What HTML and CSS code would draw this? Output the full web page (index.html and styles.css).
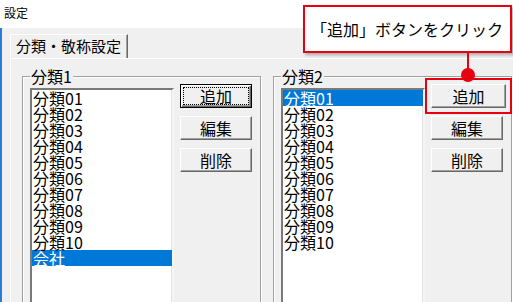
FILE: index.html
```html
<!DOCTYPE html>
<html lang="ja">
<head>
    <meta charset="UTF-8">
    <title>設定</title>
    <link rel="stylesheet" href="styles.css">
</head>
<body>
    <div class="window">
        <div class="titlebar">設定</div>

        <div class="client">
            <div class="tabs">
                <div class="tab">分類・敬称設定</div>
            </div>

            <div class="panel">
                <fieldset class="group">
                    <legend>分類1</legend>
                    <div class="group-body">
                        <ul class="listbox">
                            <li>分類01</li>
                            <li>分類02</li>
                            <li>分類03</li>
                            <li>分類04</li>
                            <li>分類05</li>
                            <li>分類06</li>
                            <li>分類07</li>
                            <li>分類08</li>
                            <li>分類09</li>
                            <li>分類10</li>
                            <li class="selected">会社</li>
                        </ul>
                        <div class="buttons">
                            <button class="btn default"><span>追加</span></button>
                            <button class="btn">編集</button>
                            <button class="btn">削除</button>
                        </div>
                    </div>
                </fieldset>

                <fieldset class="group">
                    <legend>分類2</legend>
                    <div class="group-body">
                        <ul class="listbox">
                            <li class="selected">分類01</li>
                            <li>分類02</li>
                            <li>分類03</li>
                            <li>分類04</li>
                            <li>分類05</li>
                            <li>分類06</li>
                            <li>分類07</li>
                            <li>分類08</li>
                            <li>分類09</li>
                            <li>分類10</li>
                        </ul>
                        <div class="buttons">
                            <button class="btn marked">追加</button>
                            <button class="btn">編集</button>
                            <button class="btn">削除</button>
                        </div>
                    </div>
                </fieldset>
            </div>
        </div>

        <!-- annotation overlay -->
        <div class="callout">「追加」ボタンをクリック</div>
        <div class="callout-line"></div>
        <div class="callout-dot"></div>
    </div>
</body>
</html>
```

FILE: styles.css
```css
:root {
    --face: #f0f0f0;
    --shadow: #a0a0a0;
    --dark: #696969;
    --select: #0078d7;
    --accent: #e60012;
    --frame: #2a7bd4;
}

* {
    margin: 0;
    padding: 0;
    box-sizing: border-box;
}

body {
    width: 513px;
    height: 302px;
    overflow: hidden;
    background: #fff;
    font-family: "Noto Sans CJK JP", "Liberation Sans", sans-serif;
    color: #000;
}

.window {
    position: relative;
    height: 302px;
}

.titlebar {
    height: 28px;
    padding: 5px 0 0 4px;
    font-size: 12px;
    line-height: 16px;
    background: #fff;
}

.client {
    height: 274px;
    overflow: hidden;
    background: var(--face);
    border-left: 2px solid var(--frame);
    padding: 6px 0 0 8px;
}

/* tab header */
.tabs {
    display: flex;
}

.tab {
    height: 24px;
    padding: 0 6px 0 5px;
    font-size: 15px;
    line-height: 22px;
    border-top: 1px solid #fff;
    border-left: 1px solid #fff;
    border-right: 1px solid var(--dark);
    box-shadow: inset -1px 0 var(--shadow);
}

.panel {
    display: flex;
    gap: 12px;
    height: 300px;
    padding: 8px 0 0 11px;
    border-top: 1px solid #fff;
    border-left: 1px solid #fff;
}

/* group boxes */
.group {
    width: 239px;
    height: 280px;
    border: 1px solid var(--shadow);
    box-shadow: inset 1px 1px #fff, 1px 1px #fff;
    min-width: 0;
}

.group legend {
    margin-left: 7px;
    padding: 0 1px;
    font-size: 16px;
    line-height: 18px;
    background: var(--face);
}

.group-body {
    display: flex;
    gap: 6px;
    padding-left: 7px;
}

.listbox {
    list-style: none;
    width: 144px;
    height: 230px;
    margin-top: 3px;
    background: #fff;
    border: 2px solid;
    border-color: #7a7a7a #f4f4f4 #f4f4f4 #7a7a7a;
    box-shadow: inset -1px -1px #e3e3e3;
}

.listbox li {
    height: 16px;
    padding-left: 1px;
    font-size: 16px;
    line-height: 16px;
    white-space: nowrap;
}

.listbox li.selected {
    background: var(--select);
    color: #fff;
}

/* push buttons */
.buttons {
    display: flex;
    flex-direction: column;
    gap: 8px;
    margin-top: -1px;
}

.btn {
    width: 72px;
    height: 24px;
    font-family: inherit;
    font-size: 16px;
    line-height: 20px;
    color: #000;
    background: var(--face);
    border: 1px solid;
    border-color: #fff var(--dark) var(--dark) #fff;
    box-shadow: inset -1px -1px var(--shadow);
}

.btn.default {
    display: flex;
    padding: 2px;
    border: 1px solid #000;
    box-shadow: inset 1px 1px #fff, inset -1px -1px var(--dark), inset -2px -2px var(--shadow);
}

.btn.default span {
    flex: 1;
    line-height: 16px;
    border: 1px dotted #000;
}

.btn.marked {
    width: 75px;
    outline: 2px solid var(--accent);
    outline-offset: 4px;
}

/* annotation */
.callout {
    position: absolute;
    left: 303px;
    top: 5px;
    width: 209px;
    height: 48px;
    padding-left: 6px;
    font-size: 16px;
    line-height: 44px;
    white-space: nowrap;
    background: #fff;
    border: 2px solid var(--accent);
    box-shadow: 2px 2px 3px rgba(0, 0, 0, 0.3);
}

.callout-line {
    position: absolute;
    left: 467px;
    top: 53px;
    width: 2px;
    height: 18px;
    background: var(--accent);
}

.callout-dot {
    position: absolute;
    left: 461px;
    top: 68px;
    width: 14px;
    height: 14px;
    border-radius: 50%;
    background: var(--accent);
}
```
